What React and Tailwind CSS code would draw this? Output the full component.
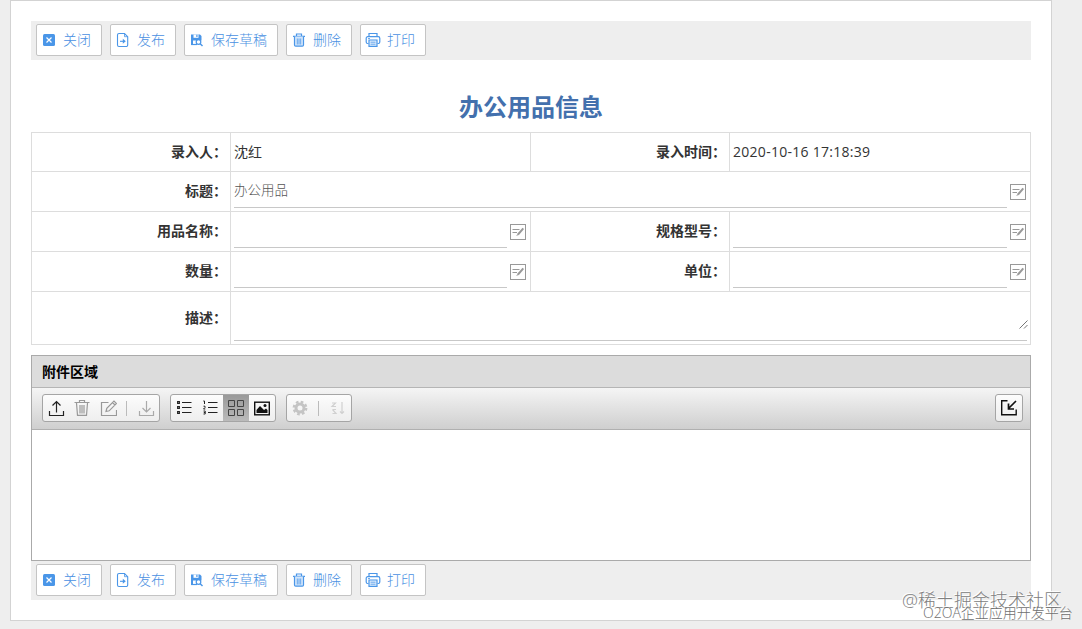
const sheetFont = "font-['Open_Sans','Noto_Sans_CJK_SC',sans-serif]";

function CloseIcon() {
  return (
    <svg width="16" height="16" viewBox="0 0 16 16" fill="none">
      <rect x="2" y="2" width="12" height="12" rx="1.5" fill="#4a96e8" />
      <path d="M5.5 5.5l5 5M10.5 5.5l-5 5" stroke="#fff" strokeWidth="1.2" />
    </svg>
  );
}

function PublishIcon() {
  return (
    <svg width="16" height="16" viewBox="0 0 16 16" fill="none" stroke="#4a96e8" strokeWidth="1.1">
      <path d="M4 1.500h5.500l3.200 3.200v8.300a1.500 1.500 0 0 1-1.500 1.500H4A1.500 1.500 0 0 1 2.500 13V3A1.500 1.500 0 0 1 4 1.500z" />
      <path d="M9.500 1.500v3.200h3.200" strokeWidth="0.800" />
      <path d="M5 9.300h4" />
      <path d="M7.800 6.800L10.800 9.300l-3 2.500z" fill="#4a96e8" stroke="none" />
    </svg>
  );
}

function DraftIcon() {
  return (
    <svg width="16" height="16" viewBox="0 0 16 16" fill="none" stroke="#4a96e8">
      <path d="M2 2.500h9l1.500 1.500v4.500H4v3.700H2z" fill="#4a96e8" stroke="none" />
      <path d="M4.500 2.500h5v3.300h-5z" fill="#fff" stroke="none" />
      <path d="M7.300 2.800h1.200v2.200H7.300z" fill="#4a96e8" stroke="none" />
      <path d="M2 12.500h6" strokeWidth="1.200" />
      <circle cx="9.500" cy="10" r="2.300" fill="#fff" strokeWidth="1.200" />
      <path d="M11.200 11.700l2.300 2.300" strokeWidth="1.400" />
    </svg>
  );
}

function DeleteIcon() {
  return (
    <svg width="16" height="16" viewBox="0 0 16 16" fill="none" stroke="#4a96e8" strokeWidth="1.2">
      <path d="M2 4.300h12M5.500 4V2h5v2" />
      <path d="M3.500 4.500V13a1.200 1.200 0 0 0 1.200 1.200h6.600A1.200 1.200 0 0 0 12.500 13V4.500" fill="#d3e6fb" />
      <path d="M6.300 6.500v6M8 6.500v6M9.700 6.500v6" strokeWidth="0.800" />
    </svg>
  );
}

function PrintIcon() {
  return (
    <svg width="16" height="16" viewBox="0 0 16 16" fill="none" stroke="#4a96e8" strokeWidth="1.2">
      <path d="M4 4.500v-3h8v3" />
      <path d="M3.500 11.500H2.700A1.500 1.500 0 0 1 1.200 10V6.300a1.600 1.600 0 0 1 1.600-1.600h10.400a1.600 1.600 0 0 1 1.600 1.600V10a1.500 1.500 0 0 1-1.500 1.500h-.800" />
      <path d="M4 8h8v6.300H4z" fill="#e4f0fd" />
      <path d="M5.500 10.200h5M5.500 12.200h5M3 6.500h2" strokeWidth="0.800" />
    </svg>
  );
}

const actions = [
  { label: '关闭', Icon: CloseIcon },
  { label: '发布', Icon: PublishIcon },
  { label: '保存草稿', Icon: DraftIcon },
  { label: '删除', Icon: DeleteIcon },
  { label: '打印', Icon: PrintIcon },
];

function ActionBar() {
  return (
    <div className="flex h-[39px] gap-2 bg-[#eee] pt-[3px] pl-[5px]">
      {actions.map(({ label, Icon }) => (
        <button
          key={label}
          className="flex h-8 items-center rounded-xs border border-[#c4c4c4] bg-white pr-[10px] pl-1 text-sm leading-5 font-light text-[#4a90e2]"
        >
          <Icon />
          <span className="ml-1.5">{label}</span>
        </button>
      ))}
    </div>
  );
}

function EditIcon() {
  return (
    <svg className="mt-[12px] ml-[3px] shrink-0" width="16" height="16" viewBox="0 0 16 16" fill="none" stroke="#999">
      <rect x="0.500" y="0.500" width="15" height="15" />
      <path d="M2.500 5.500h7M2.500 8.500h4.500" strokeWidth="1.200" />
      <path d="M13.300 4.300L8 10.500" strokeWidth="2" />
      <path d="M8 9.500L6 12l2.700-1z" fill="#999" stroke="none" />
    </svg>
  );
}

function Label({ children }) {
  return (
    <div className="flex w-[199px] shrink-0 items-center justify-end border-r border-[#ddd] pr-[3px] pb-px font-bold text-[#333]">
      {children}
    </div>
  );
}

function Field({ value }) {
  return (
    <div className="flex flex-1 pl-[3px]">
      <div className="mb-[3px] flex flex-1 items-center border-b border-[#c8c8c8] pt-[3px] text-[13.5px] font-light text-[#555]">{value}</div>
      <EditIcon />
      <div className="w-1" />
    </div>
  );
}

function InfoTable() {
  return (
    <div className="border border-[#ddd] text-sm text-[#333]">
      <div className="flex h-[39px] border-b border-[#ddd]">
        <Label>录入人：</Label>
        <div className="flex w-[300px] items-center border-r border-[#ddd] pb-px pl-[3px]">沈红</div>
        <Label>录入时间：</Label>
        <div className="flex items-center pb-px pl-[3px] tracking-[0.28px]">2020-10-16 17:18:39</div>
      </div>
      <div className="flex h-10 border-b border-[#ddd]">
        <Label>标题：</Label>
        <Field value="办公用品" />
      </div>
      <div className="flex h-10 border-b border-[#ddd]">
        <Label>用品名称：</Label>
        <div className="flex w-[300px] border-r border-[#ddd]"><Field /></div>
        <Label>规格型号：</Label>
        <Field />
      </div>
      <div className="flex h-10 border-b border-[#ddd]">
        <Label>数量：</Label>
        <div className="flex w-[300px] border-r border-[#ddd]"><Field /></div>
        <Label>单位：</Label>
        <Field />
      </div>
      <div className="flex h-[52px]">
        <Label>描述：</Label>
        <div className="relative mr-[3px] mb-[3px] ml-[3px] flex-1 border-b border-[#c8c8c8]">
          <svg className="absolute -right-px bottom-[11px]" width="9" height="9" viewBox="0 0 9 9" stroke="#666" strokeWidth="0.9">
            <path d="M0.500 8.500l8-8M5 8.500l3.500-3.500" />
          </svg>
        </div>
      </div>
    </div>
  );
}

function ToolIcon({ children, color = '#222', active }) {
  return (
    <div className={`flex h-full w-[26px] items-center justify-center ${active ? 'bg-linear-to-b from-[#999] to-[#bbb]' : ''}`}>
      <svg width="18" height="18" viewBox="0 0 18 18" fill="none" stroke={color} strokeWidth="1.2">
        {children}
      </svg>
    </div>
  );
}

function ToolGroup({ children }) {
  return (
    <div className="flex h-7 items-center overflow-hidden rounded-[3px] border border-[#a5a5a5] bg-linear-to-b from-[#fcfcfc] to-[#eee]">
      {children}
    </div>
  );
}

function Divider() {
  return <div className="mr-[6px] ml-[5px] h-[15px] w-px bg-[#bbb]" />;
}

function AttachmentArea() {
  return (
    <div className="mt-[10px] h-[206px] border border-[#aaa] bg-white">
      <div className="flex h-8 items-center border-b border-[#b5b5b5] bg-[#dcdcdc] pl-[10px] text-sm font-bold text-black">附件区域</div>
      <div className="flex h-[42px] items-center gap-[10px] border-b border-[#b0b0b0] bg-linear-to-b from-[#f5f5f5] to-[#cfcfcf] pr-[7px] pb-px pl-[10px]">
        <ToolGroup>
          <ToolIcon>
            <path d="M2.500 12v4.500h14V12M9.500 13.500V2.500M5.500 6.500l4-4 4 4" />
          </ToolIcon>
          <ToolIcon color="#999">
            <path d="M1.500 3.500h15M6.500 3V1.500h5V3M3.500 4l1 12.400h9l1-12.400M7 6v8.500M9 6v8.500M11 6v8.500" />
          </ToolIcon>
          <ToolIcon color="#999">
            <path d="M9.500 3.500H2.500v13h15V11" />
            <path d="M7 12.500l.800-3.200L15 2l2.500 2.500-7.300 7.300zM13.500 3.500L16 6" />
          </ToolIcon>
          <Divider />
          <ToolIcon color="#aaa">
            <path d="M2.500 12v4.500h14V12M9.500 2v11M5.500 9l4 4 4-4" />
          </ToolIcon>
        </ToolGroup>
        <ToolGroup>
          <ToolIcon>
            <path d="M7 3.500h9.500M7 8.500h9.500M7 13.500h9.500" strokeWidth="1" />
            <path d="M2.600 2.600h1.800v1.800H2.600zM2.600 7.600h1.800v1.800H2.600zM2.600 12.600h1.800v1.800H2.600z" strokeWidth="1.100" />
          </ToolIcon>
          <ToolIcon>
            <path d="M7 3.500h9.500M7 8.500h9.500M7 13.500h9.500" strokeWidth="1" />
            <path d="M2.300 2h1.200v3M2.500 7.200h1.500v1.300l-1.500 1.500H4.300M2.500 12h1.700v3H2.500M2.800 13.500h1.400" strokeWidth="1" />
          </ToolIcon>
          <ToolIcon active color="#444">
            <path d="M1.500 1.500h6v6h-6zM10.500 1.500h6v6h-6zM1.500 10.500h6v6h-6zM10.500 10.500h6v6h-6z" strokeWidth="1" />
          </ToolIcon>
          <ToolIcon color="#111">
            <rect x="1.700" y="3.200" width="14.600" height="12.600" strokeWidth="1.400" />
            <path d="M3.500 14v-3l3.500-4 4 4 2-1.500 1.500 1.500v3z" fill="#111" stroke="none" />
            <circle cx="12" cy="6.500" r="1.500" fill="#111" stroke="none" />
          </ToolIcon>
        </ToolGroup>
        <ToolGroup>
          <ToolIcon color="#c4c4c4">
            <circle cx="9" cy="9" r="4" strokeWidth="3" />
            <circle cx="9" cy="9" r="6.200" strokeWidth="2.400" strokeDasharray="2.600 2.270" />
          </ToolIcon>
          <Divider />
          <ToolIcon color="#d0d0d0">
            <path d="M3 4h3.500L3 7.500h4M3.500 10.500h3.500M3.500 14.500H7L3.500 10.500M13 3v11.500M11 12.500l2 2 2-2" />
          </ToolIcon>
        </ToolGroup>
        <div className="ml-auto">
          <ToolGroup>
            <ToolIcon color="#111">
              <path d="M7.500 1.700H1.700v14h14.500V10.500" strokeWidth="1.400" />
              <path d="M16 2L9 9M8.500 4.500v5.500h5.500" strokeWidth="1.700" />
            </ToolIcon>
          </ToolGroup>
        </div>
      </div>
    </div>
  );
}

export default function App() {
  return (
    <div className={`relative h-[629px] w-[1082px] overflow-hidden bg-[#eee] pl-[10px] ${sheetFont}`}>
      <div className="h-[621px] w-[1042px] border border-[#d3d3d3] bg-white px-5 pt-5">
        <ActionBar />
        <h1 className="mt-[29px] mb-[7px] h-9 text-center text-2xl leading-9 font-bold text-[#4370ad]">办公用品信息</h1>
        <InfoTable />
        <AttachmentArea />
        <ActionBar />
      </div>

      {/* Watermarks */}
      <div className="absolute top-[588px] left-[902px] text-lg leading-6 font-light whitespace-nowrap text-[#808080] [text-shadow:-1px_-1px_0_#fff]">@稀土掘金技术社区</div>
      <div className="absolute top-[603px] left-[923px] text-sm leading-5 font-light whitespace-nowrap text-[#707070] [text-shadow:-1px_-1px_0_#fff]">O2OA企业应用开发平台</div>
    </div>
  );
}
